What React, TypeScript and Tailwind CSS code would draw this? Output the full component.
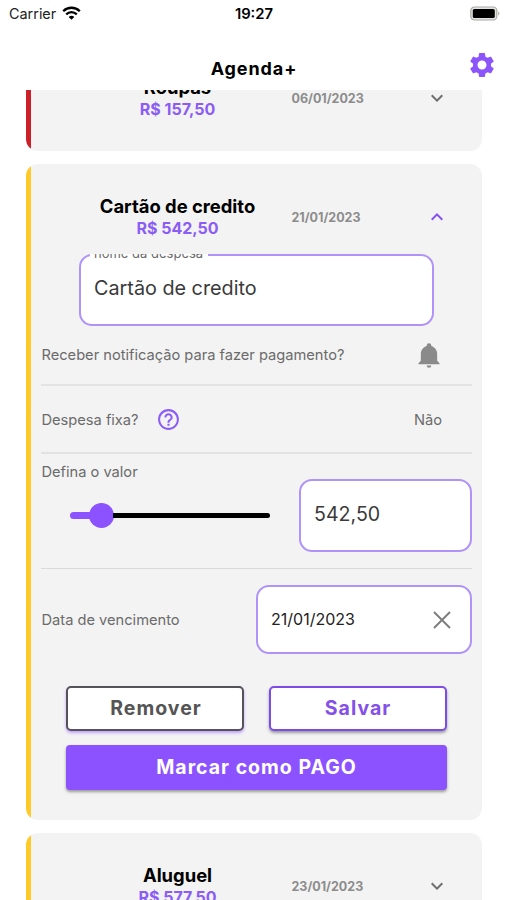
import React from "react";

import {
  MdHelpOutline,
  MdKeyboardArrowDown,
  MdKeyboardArrowUp,
  MdSettings,
} from "react-icons/md";

interface ExpenseHeaderProps {
  name: string;
  value: string;
  date: string;
  open?: boolean;
}

interface ExpenseCardProps extends ExpenseHeaderProps {
  accent: string;
  children?: React.ReactNode;
}

const StatusBar: React.FC = () => {
  return (
    <div className="grid h-7 shrink-0 grid-cols-3 items-center pl-[9px] pr-[7px]">
      <div className="flex items-center gap-[6px]">
        <span className="text-[14.4px] leading-none text-[#222]">Carrier</span>
        <svg
          width="19"
          height="15"
          viewBox="0 0 19 15"
          fill="none"
          className="-mt-[2px]"
        >
          <path
            d="M1.2 5.2C5.9.6 13.1.6 17.8 5.2"
            stroke="#000"
            strokeWidth="2.3"
          />
          <path
            d="M4.2 8.3c3-2.9 7.6-2.9 10.6 0"
            stroke="#000"
            strokeWidth="2.3"
          />
          <path d="M6.7 10.9c1.6-1.5 4-1.5 5.6 0L9.5 13.8z" fill="#000" />
        </svg>
      </div>
      <div className="-ml-[1px] text-center text-[14.8px] font-semibold leading-none text-black">
        19:27
      </div>
      <div className="-mt-[2px] flex justify-end">
        <svg width="30" height="15" viewBox="0 0 30 15">
          <rect
            x="0.8"
            y="1"
            width="26"
            height="13"
            rx="3.6"
            fill="#e4e4e0"
            stroke="#a9a9a5"
            strokeWidth="1.2"
          />
          <rect x="2.8" y="3" width="22" height="9" rx="1.6" fill="#000" />
          <path d="M28.2 5.4c1.7.7 1.7 3.5 0 4.2z" fill="#a9a9a5" />
        </svg>
      </div>
    </div>
  );
};

const ExpenseHeader: React.FC<ExpenseHeaderProps> = ({
  name,
  value,
  date,
  open,
}) => {
  return (
    <div className="flex h-[74px] shrink-0 items-center">
      <div className="ml-[26.5px] w-60 text-center font-bold">
        <div className="text-[18.4px] leading-[21px] text-black">{name}</div>
        <div className="text-[16px] leading-[22px] text-[#8b5cf6]">{value}</div>
      </div>
      <div className="-ml-[6px] mt-[2px] w-[137.5px] text-[12.5px] font-bold text-[#8c8c8c]">
        {date}
      </div>
      {open ? (
        <MdKeyboardArrowUp size={24} className="-ml-[4px] text-[#8450f5]" />
      ) : (
        <MdKeyboardArrowDown size={24} className="-ml-[4px] text-[#6f6f6f]" />
      )}
    </div>
  );
};

const ExpenseCard: React.FC<ExpenseCardProps> = ({
  accent,
  children,
  ...header
}) => {
  return (
    <div className="flex shrink-0 overflow-hidden rounded-[12px] bg-[#f3f3f3]">
      <div className={`w-[5px] shrink-0 ${accent}`} />
      <div className="min-w-0 flex-1 py-4">
        <ExpenseHeader {...header} />
        {children}
      </div>
    </div>
  );
};

const ExpenseForm: React.FC = () => {
  return (
    <div className="flex flex-col px-[10px] pb-[14px] text-[14.65px] text-[#6b6b6b]">
      <div className="relative ml-[38px] h-[72px] w-[355px] overflow-hidden">
        <div className="flex h-full items-center rounded-[13px] border-2 border-[#b093f8] bg-white pb-[2px] pl-[13px] text-[19.8px] text-[#3a3a3a]">
          Cartão de credito
        </div>
        {/* floating label, its upper half is cut by the field's edge */}
        <div className="absolute top-0 left-[11px] h-[7px] w-[118px] bg-white pl-1 text-[13px] whitespace-nowrap">
          <div className="-mt-[8px] leading-[14px]">nome da despesa</div>
        </div>
      </div>

      <div className="flex h-[60px] items-center justify-between border-b-2 border-[#e4e4e4] pr-[29px]">
        <span className="pt-[2px] pl-[0.5px]">
          Receber notificação para fazer pagamento?
        </span>
        <svg width="28" height="28" viewBox="0 0 24 24" fill="#8a8a8a">
          <path d="M21 19v1H3v-1l2-2v-6c0-3.1 2.03-5.83 5-6.71V4a2 2 0 0 1 4 0v.29c2.97.88 5 3.61 5 6.71v6l2 2m-7 2a2 2 0 0 1-4 0" />
        </svg>
      </div>

      <div className="flex h-[68px] items-center border-b-2 border-[#e2e2e2] pr-[30px]">
        <span className="pt-[3px] pl-[0.5px]">Despesa fixa?</span>
        <MdHelpOutline size={25} className="ml-[17px] text-[#8b5cf6]" />
        <span className="ml-auto pt-[3px]">Não</span>
      </div>

      <div className="flex h-[115px] justify-between border-b border-[#dadada]">
        <div className="flex flex-col">
          <span className="mt-[7px] pl-[0.5px] leading-[22px]">
            Defina o valor
          </span>
          <div className="mt-[20px] ml-[29px] flex h-[25px] w-[200px] items-center">
            <div className="h-[7px] w-[22px] rounded-l-full bg-[#8c52ff]" />
            <div className="-ml-[3px] size-[25px] shrink-0 rounded-full bg-[#8c52ff]" />
            <div className="-ml-px h-[5px] flex-1 rounded-r-full bg-black" />
          </div>
        </div>
        <div className="mt-[25px] flex h-[73px] w-[173px] items-center rounded-[13px] border-2 border-[#b093f8] bg-white pb-[2px] pl-[13px] text-[19.6px] text-[#3a3a3a]">
          542,50
        </div>
      </div>

      <div className="mt-[16px] flex h-[70px] items-center justify-between">
        <span className="pt-[2px] pl-[0.5px]">Data de vencimento</span>
        <div className="-mt-[1px] flex h-[69px] w-[216px] items-center justify-between rounded-[13px] border-2 border-[#b093f8] bg-white pl-[13px] pr-[19px] text-[16px] text-[#222]">
          <span className="-mt-[1px]">21/01/2023</span>
          <svg width="18" height="18" viewBox="0 0 18 18" fill="none">
            <path d="M1 1l16 16M17 1L1 17" stroke="#7d7d7d" strokeWidth="1.9" />
          </svg>
        </div>
      </div>

      <div className="ml-[25px] mt-[31px] flex w-[381px] flex-wrap justify-between gap-y-[14px] text-[19.5px] font-bold tracking-[1px]">
        <button className="h-[45px] w-[178px] rounded-[5px] border-2 border-[#55525a] bg-white pt-px pl-[2px] text-[#555] shadow-[0_2px_3px_#8c52ff80]">
          Remover
        </button>
        <button className="h-[45px] w-[178px] rounded-[5px] border-2 border-[#7f4be6] bg-white pt-px text-[#8450e8] shadow-[0_2px_3px_#55555590]">
          Salvar
        </button>
        <button className="h-[45px] w-full rounded-[4px] bg-[#8c52ff] text-white shadow-[0_2px_3px_#55555590]">
          Marcar como PAGO
        </button>
      </div>
    </div>
  );
};

const App: React.FC = () => {
  return (
    <div className="flex h-[900px] w-[507px] flex-col overflow-hidden bg-white font-['Inter',sans-serif]">
      <StatusBar />
      <header className="grid h-[62px] shrink-0 grid-cols-[1fr_auto_1fr] items-center">
        <h1 className="col-start-2 pt-[18px] pl-[1px] text-[18px] font-bold tracking-[0.9px] text-black">
          Agenda+
        </h1>
        <MdSettings
          size={30}
          className="mr-[10px] mt-[11px] justify-self-end text-[#8b55fb]"
        />
      </header>
      <main className="min-h-0 flex-1 overflow-hidden">
        <div className="-mt-[45px] ml-[26px] flex w-[456px] flex-col gap-[13px]">
          <ExpenseCard
            accent="bg-[#cb2027]"
            name="Roupas"
            value="R$ 157,50"
            date="06/01/2023"
          />
          <ExpenseCard
            accent="bg-[#ffca28]"
            name="Cartão de credito"
            value="R$ 542,50"
            date="21/01/2023"
            open
          >
            <ExpenseForm />
          </ExpenseCard>
          <ExpenseCard
            accent="bg-[#ffca28]"
            name="Aluguel"
            value="R$ 577,50"
            date="23/01/2023"
          />
        </div>
      </main>
    </div>
  );
};

export default App;
